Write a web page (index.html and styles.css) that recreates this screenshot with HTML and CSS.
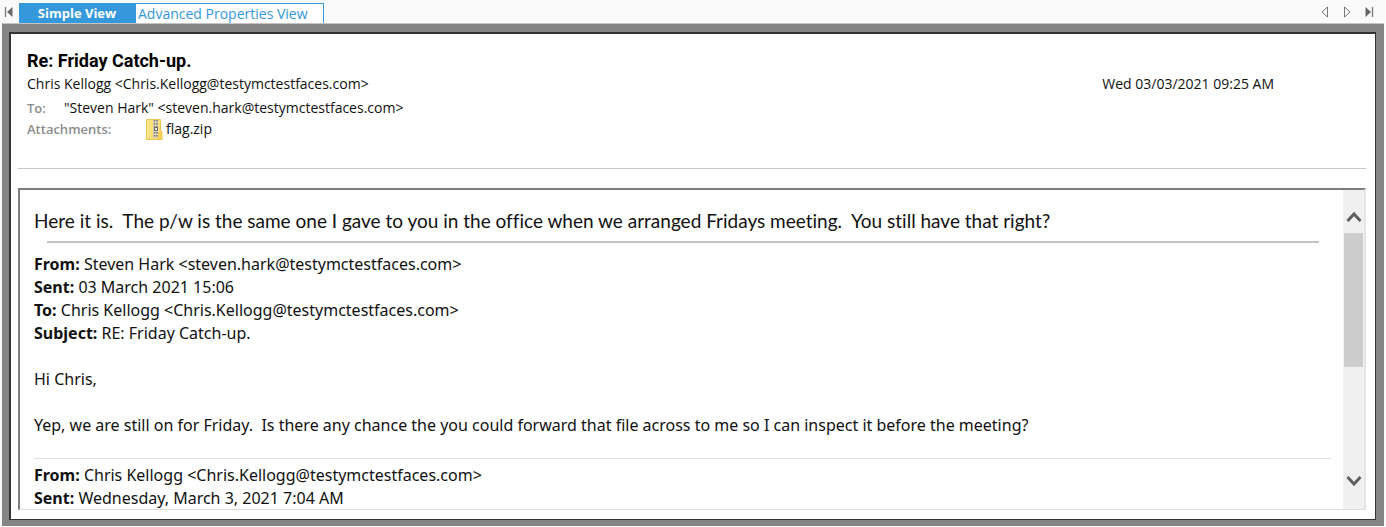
FILE: index.html
```html
<!DOCTYPE html>
<html lang="en">
<head>
<meta charset="utf-8">
<title>Re: Friday Catch-up.</title>
<link rel="stylesheet" href="styles.css">
</head>
<body>
<nav class="tabbar">
  <button class="nav-btn nav-first" aria-label="First tab"><svg width="10" height="10" viewBox="0 0 10 10"><path d="M2.500 0v10" stroke="#777" stroke-width="1.300"/><path d="M9.500 0v10L4 5z" fill="#666"/></svg></button>
  <button class="tab tab-active">Simple View</button>
  <button class="tab tab-plain">Advanced Properties View</button>
  <div class="nav-group">
    <button class="nav-btn" aria-label="Previous tab"><svg width="10" height="12" viewBox="0 0 10 12"><path d="M7.500 1v10L2 6z" fill="none" stroke="#777"/></svg></button>
    <button class="nav-btn" aria-label="Next tab"><svg width="10" height="12" viewBox="0 0 10 12"><path d="M2.500 1v10L8 6z" fill="none" stroke="#777"/></svg></button>
    <button class="nav-btn" aria-label="Last tab"><svg width="10" height="12" viewBox="0 0 10 12"><path d="M1.500 1v10L7 6z" fill="#666"/><path d="M8.500 1v10" stroke="#777" stroke-width="1.300"/></svg></button>
  </div>
</nav>
<main class="frame">
  <article class="message">
    <header class="head">
      <h1 class="subject">Re: Friday Catch-up.</h1>
      <div class="sender-row">
        <span>Chris Kellogg &lt;Chris.Kellogg@testymctestfaces.com&gt;</span>
        <time class="date" datetime="2021-03-03T09:25">Wed 03/03/2021 09:25 AM</time>
      </div>
      <div class="to-row"><span class="label to-label">To:</span><span>"Steven Hark" &lt;steven.hark@testymctestfaces.com&gt;</span></div>
      <div class="files-row">
        <span class="label files-label">Attachments:</span>
        <a class="file" href="#flag"><svg width="17" height="21" viewBox="0 0 17 21"><path d="M.5 .5h14v12h1.500v8H.5z" fill="#fbdf7c" stroke="#ebc750"/><path d="M11.500 13h4.500v7h-4.500z" fill="#f5cf58"/><path d="M2 2v17" stroke="#fff0b5"/><path d="M7 1h5v18H7z" fill="#d9d2b4"/><path d="M8.500 1v18M11 1v18" stroke="#77787a" stroke-width="1.500" stroke-dasharray="1.500 1.500"/><path d="M8.500 8.500h3v3h-3z" fill="#eee" stroke="#666"/></svg>flag.zip</a>
      </div>
    </header>
    <div class="viewer">
      <div class="content">
        <p class="lead">Here it is.&nbsp; The p/w is the same one I gave to you in the office when we arranged Fridays meeting.&nbsp; You still have that right?</p>
        <hr class="rule-strong">
        <div class="text">
          <p><b>From:</b> Steven Hark &lt;steven.hark@testymctestfaces.com&gt;<br><b>Sent:</b> 03 March 2021 15:06<br><b>To:</b> Chris Kellogg &lt;Chris.Kellogg@testymctestfaces.com&gt;<br><b>Subject:</b> RE: Friday Catch-up.</p>
          <p>Hi Chris,</p>
          <p>Yep, we are still on for Friday.&nbsp; Is there any chance the you could forward that file across to me so I can inspect it before the meeting?</p>
        </div>
        <hr class="rule-light">
        <p class="text"><b>From:</b> Chris Kellogg &lt;Chris.Kellogg@testymctestfaces.com&gt;<br><b>Sent:</b> Wednesday, March 3, 2021 7:04 AM</p>
      </div>
      <div class="scrollbar">
        <button class="arrow" aria-label="Scroll up"><svg width="16" height="12" viewBox="0 0 16 12"><path d="M1.500 10L8 3l6.500 7" fill="none" stroke="#606060" stroke-width="3"/></svg></button>
        <div class="track"><div class="thumb"></div></div>
        <button class="arrow" aria-label="Scroll down"><svg width="16" height="12" viewBox="0 0 16 12"><path d="M1.500 2L8 9l6.500-7" fill="none" stroke="#606060" stroke-width="3"/></svg></button>
      </div>
    </div>
  </article>
</main>
</body>
</html>
```
FILE: styles.css
```css
* { box-sizing: border-box; }
body {
  margin: 0;
  height: 100vh;
  padding: 0 2px 1px;
  display: flex;
  flex-direction: column;
  background: #fafafa;
  color: #111;
  font-family: "Open Sans", sans-serif;
  font-size: 14px;
}
button {
  margin: 0;
  padding: 0;
  border: 0;
  background: none;
  font: inherit;
}
p, h1, hr { margin: 0; }
svg { display: block; }
.tabbar {
  display: flex;
  align-items: flex-end;
  flex: none;
  height: 24px;
  border-bottom: 1px solid #c4c4c4;
}
.nav-first { width: 17px; padding: 0 0 6px 1px; }
.tab {
  height: 20px;
  line-height: 20px;
}
.tab-active {
  width: 116px;
  background: #3498db;
  color: #fff;
  font-size: 13px;
  font-weight: 700;
}
.tab-plain {
  width: 189px;
  border: 1px solid #3498db;
  border-bottom: 0;
  background: #fff;
  color: #3498db;
  padding-left: 2px;
  text-align: left;
}
.nav-group {
  display: flex;
  gap: 12px;
  margin-left: auto;
  padding: 0 10px 5px 0;
}
.frame {
  flex: 1;
  min-height: 0;
  display: flex;
  padding: 8px 8px 6px 7px;
  background: #858585;
}
.message {
  flex: 1;
  min-width: 0;
  display: flex;
  flex-direction: column;
  border: 2px solid #333;
  border-width: 2px 1px 1px 2px;
  background: #fff;
  padding: 0 9px 9px 7px;
}
.head {
  flex: none;
  height: 135px;
  padding: 16px 0 0 9px;
  border-bottom: 1px solid #c8c8c8;
}
.subject {
  font-family: Roboto, sans-serif;
  font-size: 18px;
  line-height: 22px;
  font-weight: 700;
  color: #000;
}
.sender-row {
  display: flex;
  justify-content: space-between;
  line-height: 24px;
}
.date { padding-right: 92px; }
.to-row { display: flex; line-height: 24px; }
.label { color: #8c8c8c; font-size: 13px; font-weight: 600; }
.to-label { width: 37px; }
.files-row { display: flex; line-height: 18px; }
.files-label { width: 119px; }
.file {
  display: flex;
  align-items: center;
  gap: 3px;
  height: 18px;
  color: #111;
  text-decoration: none;
}
.viewer {
  flex: 1;
  min-height: 0;
  margin-top: 19px;
  display: flex;
  border: 2px solid #7d7d7d;
  border-right-color: #e5e5e5;
  border-bottom: 1px solid #ddd;
}
.content {
  flex: 1;
  min-width: 0;
  overflow: hidden;
  padding: 18px 12px 0 14px;
  font-family: "Noto Sans", sans-serif;
  font-size: 16px;
}
.lead {
  font-family: Lato, sans-serif;
  font-size: 19px;
  line-height: 26px;
  font-variant-ligatures: none;
}
.rule-strong {
  margin: 7px 12px 10px 13px;
  border: 0;
  border-top: 2px solid #c2c2c2;
}
.text { line-height: 23px; }
.text p + p { margin-top: 23px; }
.rule-light {
  margin: 21px 0 5px;
  border: 0;
  border-top: 1px solid #e2e2e2;
}
.scrollbar {
  flex: none;
  width: 21px;
  display: flex;
  flex-direction: column;
  background: #f0f0f0;
}
.arrow {
  flex: none;
  height: 43px;
  display: flex;
  align-items: center;
  justify-content: center;
  padding-top: 10px;
}
.arrow:last-child { padding-top: 0; height: 56px; }
.track { flex: 1; padding: 0 1px; }
.thumb { height: 61%; background: #cdcdcd; }
```
